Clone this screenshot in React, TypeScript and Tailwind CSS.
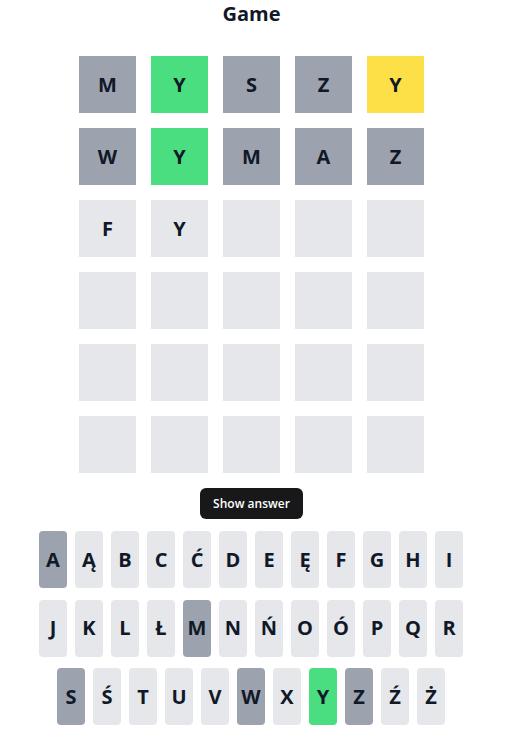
const rows: { letter: string; state: string }[][] = [
  [
    { letter: 'M', state: 'absent' },
    { letter: 'Y', state: 'correct' },
    { letter: 'S', state: 'absent' },
    { letter: 'Z', state: 'absent' },
    { letter: 'Y', state: 'present' },
  ],
  [
    { letter: 'W', state: 'absent' },
    { letter: 'Y', state: 'correct' },
    { letter: 'M', state: 'absent' },
    { letter: 'A', state: 'absent' },
    { letter: 'Z', state: 'absent' },
  ],
  [
    { letter: 'F', state: 'empty' },
    { letter: 'Y', state: 'empty' },
    { letter: '', state: 'empty' },
    { letter: '', state: 'empty' },
    { letter: '', state: 'empty' },
  ],
  [0, 1, 2, 3, 4].map(() => ({ letter: '', state: 'empty' })),
  [0, 1, 2, 3, 4].map(() => ({ letter: '', state: 'empty' })),
  [0, 1, 2, 3, 4].map(() => ({ letter: '', state: 'empty' })),
]

const keyboard = [
  ['A', 'Ą', 'B', 'C', 'Ć', 'D', 'E', 'Ę', 'F', 'G', 'H', 'I'],
  ['J', 'K', 'L', 'Ł', 'M', 'N', 'Ń', 'O', 'Ó', 'P', 'Q', 'R'],
  ['S', 'Ś', 'T', 'U', 'V', 'W', 'X', 'Y', 'Z', 'Ź', 'Ż'],
]

const used: Record<string, string> = {
  A: 'absent',
  M: 'absent',
  S: 'absent',
  W: 'absent',
  Z: 'absent',
  Y: 'correct',
}

const stateClass: Record<string, string> = {
  absent: 'bg-[#9ca3af]',
  correct: 'bg-[#4ade80]',
  present: 'bg-[#fde047]',
  empty: 'bg-[#e5e7eb]',
}

export default function App() {
  return (
    <div className="w-[506px] h-[740px] bg-white text-[#111827]" style={{ fontFamily: '"Open Sans", "Noto Sans", sans-serif' }}>
      <h1 className="text-center text-xl leading-7 font-bold pr-[3px]">Game</h1>

      {/* Board */}
      <div className="mt-7 flex flex-col items-center gap-[15px] pr-[3px]">
        {rows.map((row, r) => (
          <div key={r} className="flex gap-[15px]">
            {row.map((tile, c) => (
              <div
                key={c}
                className={`w-[57px] h-[57px] flex items-center justify-center text-xl font-bold ${stateClass[tile.state]}`}
              >
                {tile.letter}
              </div>
            ))}
          </div>
        ))}
      </div>

      {/* Show answer */}
      <div className="mt-[15px] flex justify-center pr-[3px]">
        <button className="w-[103px] h-[31px] rounded-md bg-[#18181b] text-white text-xs font-semibold">
          Show answer
        </button>
      </div>

      {/* Keyboard */}
      <div className="mt-3 flex flex-col items-center gap-[11.5px] pr-[4px]">
        {keyboard.map((row, r) => (
          <div key={r} className="flex gap-2">
            {row.map((k) => (
              <div
                key={k}
                className={`w-7 h-[57px] rounded flex items-center justify-center text-xl font-bold ${stateClass[used[k] ?? 'empty']}`}
              >
                {k}
              </div>
            ))}
          </div>
        ))}
      </div>
    </div>
  )
}
